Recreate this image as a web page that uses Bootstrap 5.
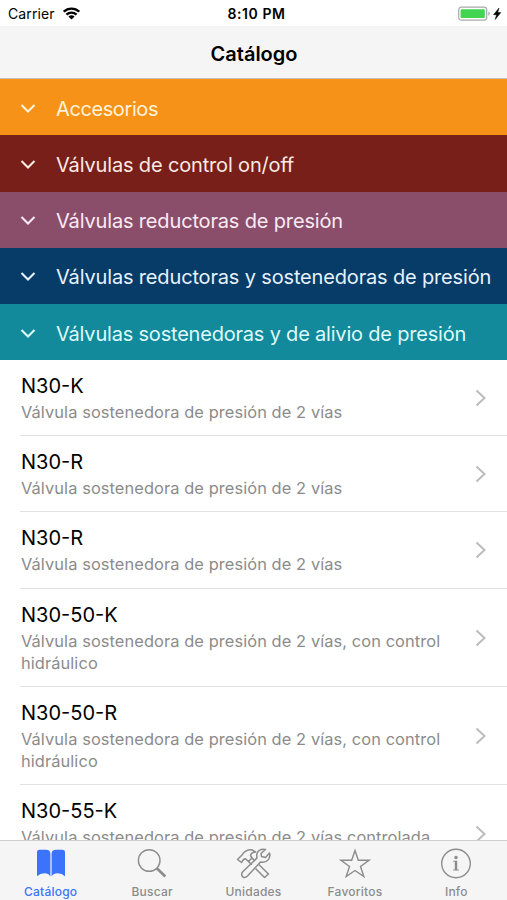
<!DOCTYPE html>
<html lang="es">
<head>
<meta charset="utf-8">
<meta name="viewport" content="width=device-width, initial-scale=1">
<title>Catálogo</title>
<link href="https://cdn.jsdelivr.net/npm/bootstrap@5.3.0/dist/css/bootstrap.min.css" rel="stylesheet">
<style>
body{font-family:Inter,"Liberation Sans",sans-serif;color:#000;background:#fff}
svg{display:block;flex:none}
.status-bar{height:26px;font-size:14px;line-height:26px;padding:1px 5px 0 8px;letter-spacing:.1px}
.status-bar>*{flex:1 1 0}
.clock{letter-spacing:.6px;padding-left:3px}
.title-bar{height:53px;background:#f5f5f5;border-bottom:1px solid #c5bfb8;font-size:20px;font-weight:600;padding:4px 0 0 1px}
.category{height:56.25px;padding:3px 0 0 20px;font-size:20px;letter-spacing:-.16px;gap:20px;white-space:nowrap}
.cat-a{background:#f59217;color:#fff3dc;letter-spacing:-.4px}
.cat-b{background:#781f19;color:#fbe9e4}
.cat-c{background:#8a4e6b;color:#fbeaf3}
.cat-d{background:#073b68;color:#e6f2fc}
.cat-e{background:#128a9b;color:#dffafc;letter-spacing:-.2px}
.product{margin-left:20px;padding:13px 20px 12.1px 1px;border-bottom:1px solid #e2e2e2}
.product h2{font-size:20px;line-height:26px;font-weight:400;margin:0}
.product p{font-size:16.4px;letter-spacing:.09px;line-height:22px;color:#8b8b8b;margin:2px 0 0;width:440px}
.tab-bar{height:60px;background:#f5f5f5;border-top:1px solid #cfcfcf;color:#8c8c8c;font-size:12px;font-weight:500;letter-spacing:.22px}
.tab-bar a{color:inherit;line-height:16px;padding-top:6px}
.tab-bar span{padding-top:5px}
.tab-bar a.current{color:#3b74fb}
</style>
<script src="https://cdn.jsdelivr.net/npm/bootstrap@5.3.0/dist/js/bootstrap.bundle.min.js"></script>
</head>
<body class="vh-100 overflow-hidden d-flex flex-column">
<header class="flex-shrink-0">
  <div class="status-bar d-flex align-items-center">
    <div class="d-flex align-items-center"><span>Carrier</span>
      <svg class="ms-2" width="17" height="13" viewBox="0 0 17 13"><g fill="none" stroke="#000" stroke-width="2.3"><path d="M.8 4.7a11 11 0 0 1 15.4 0"/><path d="M3.5 7.7a7.2 7.2 0 0 1 10 0"/></g><path d="M5.4 9.6a4.5 4.5 0 0 1 6.2 0L8.500 12.600z"/></svg>
    </div>
    <div class="clock text-center fw-semibold">8:10 PM</div>
    <div class="d-flex justify-content-end align-items-center">
      <svg width="44" height="16" viewBox="0 0 44 16"><rect x=".7" y="1.2" width="28" height="13" rx="2.6" fill="#fff" stroke="#a9a9a9" stroke-width="1.2"/><rect x="2.6" y="3.3" width="24.2" height="8.8" rx=".8" fill="#43d551"/><path d="M30.3 5.600Q31.800 6.200 31.800 7.700T30.300 9.800Z" fill="#a9a9a9"/><path d="M41 2l-5.400 6.700h3L37.200 13.500l5.600-6.900h-3.100z" stroke="#000" stroke-width=".5"/></svg>
    </div>
  </div>
  <div class="title-bar d-flex align-items-center justify-content-center">Catálogo</div>
</header>
<main class="flex-grow-1 overflow-hidden">
  <div class="category cat-a d-flex align-items-center"><svg width="16" height="10" viewBox="0 0 16 10"><path d="M1.5 1 8 7.500l6.500-6.500" fill="none" stroke="currentColor" stroke-width="2.1"/></svg><span>Accesorios</span></div>
  <div class="category cat-b d-flex align-items-center"><svg width="16" height="10" viewBox="0 0 16 10"><path d="M1.5 1 8 7.500l6.500-6.500" fill="none" stroke="currentColor" stroke-width="2.1"/></svg><span>Válvulas de control on/off</span></div>
  <div class="category cat-c d-flex align-items-center"><svg width="16" height="10" viewBox="0 0 16 10"><path d="M1.5 1 8 7.500l6.500-6.500" fill="none" stroke="currentColor" stroke-width="2.1"/></svg><span>Válvulas reductoras de presión</span></div>
  <div class="category cat-d d-flex align-items-center"><svg width="16" height="10" viewBox="0 0 16 10"><path d="M1.5 1 8 7.500l6.500-6.500" fill="none" stroke="currentColor" stroke-width="2.1"/></svg><span>Válvulas reductoras y sostenedoras de presión</span></div>
  <div class="category cat-e d-flex align-items-center"><svg width="16" height="10" viewBox="0 0 16 10"><path d="M1.5 1 8 7.500l6.500-6.500" fill="none" stroke="currentColor" stroke-width="2.1"/></svg><span>Válvulas sostenedoras y de alivio de presión</span></div>
  <div class="product d-flex align-items-center justify-content-between"><div><h2>N30-K</h2><p>Válvula sostenedora de presión de 2 vías</p></div><svg width="12" height="18" viewBox="0 0 12 18"><path d="M1.5 1.500 9.500 9l-8 7.500" fill="none" stroke="#bcbcc0" stroke-width="2"/></svg></div>
  <div class="product d-flex align-items-center justify-content-between"><div><h2>N30-R</h2><p>Válvula sostenedora de presión de 2 vías</p></div><svg width="12" height="18" viewBox="0 0 12 18"><path d="M1.5 1.500 9.500 9l-8 7.500" fill="none" stroke="#bcbcc0" stroke-width="2"/></svg></div>
  <div class="product d-flex align-items-center justify-content-between"><div><h2>N30-R</h2><p>Válvula sostenedora de presión de 2 vías</p></div><svg width="12" height="18" viewBox="0 0 12 18"><path d="M1.5 1.500 9.500 9l-8 7.500" fill="none" stroke="#bcbcc0" stroke-width="2"/></svg></div>
  <div class="product d-flex align-items-center justify-content-between"><div><h2>N30-50-K</h2><p>Válvula sostenedora de presión de 2 vías, con control hidráulico</p></div><svg width="12" height="18" viewBox="0 0 12 18"><path d="M1.5 1.500 9.500 9l-8 7.500" fill="none" stroke="#bcbcc0" stroke-width="2"/></svg></div>
  <div class="product d-flex align-items-center justify-content-between"><div><h2>N30-50-R</h2><p>Válvula sostenedora de presión de 2 vías, con control hidráulico</p></div><svg width="12" height="18" viewBox="0 0 12 18"><path d="M1.5 1.500 9.500 9l-8 7.500" fill="none" stroke="#bcbcc0" stroke-width="2"/></svg></div>
  <div class="product d-flex align-items-center justify-content-between"><div><h2>N30-55-K</h2><p>Válvula sostenedora de presión de 2 vías controlada<br>&nbsp;</p></div><svg width="12" height="18" viewBox="0 0 12 18"><path d="M1.5 1.500 9.500 9l-8 7.500" fill="none" stroke="#bcbcc0" stroke-width="2"/></svg></div>
</main>
<nav class="tab-bar d-flex flex-shrink-0">
  <a href="#" class="current col d-flex flex-column align-items-center text-decoration-none"><svg width="32" height="32" viewBox="0 0 32 32"><path d="M2 5Q2 2.800 4.500 2.800H11Q15.400 2.800 15.400 7V29.500Q13.500 26.300 9.500 26.300 5 26.300 2 29.200ZM30 5Q30 2.800 27.500 2.800H21Q16.600 2.800 16.600 7V29.500Q18.500 26.300 22.500 26.300 27 26.300 30 29.200Z" fill="currentColor"/></svg><span>Catálogo</span></a>
  <a href="#" class="col d-flex flex-column align-items-center text-decoration-none"><svg width="32" height="32" viewBox="0 0 32 32" fill="none" stroke="currentColor"><circle cx="13.2" cy="13.500" r="10.800" stroke-width="1.400"/><path d="m20.800 21.200 8.500 8.300" stroke-width="2.600"/></svg><span>Buscar</span></a>
  <a href="#" class="col d-flex flex-column align-items-center text-decoration-none"><svg width="38" height="32" viewBox="0 0 38 32" fill="none" stroke="currentColor" stroke-width="1.500" stroke-linejoin="round"><path d="M2.500 12.500 7 8Q10 2.500 17 2.800L20.500 5Q16 5.500 15.500 8.500L17 11 13.500 14.500 10.800 12Q8.800 11.200 6.500 15.500Z"/><path d="M17 11 20 14M13.500 14.500 16.800 17.800M23.800 17.500 33.500 27 29.500 30.500 20.500 21.500"/><path d="M30.500 2.500Q24 1.500 22 6.500 21.500 9 22 11L7.500 25Q5.500 28 8 30 10.300 31.300 12.500 29L25.500 15Q31.500 16 34 11.500 35.500 8.500 34.500 6L30.500 10.500 26.500 9.500 26 6.500Z"/></svg><span>Unidades</span></a>
  <a href="#" class="col d-flex flex-column align-items-center text-decoration-none"><svg width="32" height="32" viewBox="0 0 32 32" fill="none" stroke="currentColor" stroke-width="1.400"><path d="M16 3.500 19.300 13.300H30L21.500 19.500 24.800 29.500 16 23.500 7.200 29.500 10.500 19.500 2 13.300H12.700Z"/></svg><span>Favoritos</span></a>
  <a href="#" class="col d-flex flex-column align-items-center text-decoration-none"><svg width="32" height="32" viewBox="0 0 32 32"><circle cx="16" cy="16.500" r="14.300" fill="none" stroke="currentColor" stroke-width="1.400"/><circle cx="16" cy="10.500" r="1.700" fill="currentColor"/><path d="M13.200 13.700h4v8.700h1.600v1h-5.600v-1h1.600v-7.700h-1.600z" fill="currentColor"/></svg><span>Info</span></a>
</nav>
</body>
</html>
